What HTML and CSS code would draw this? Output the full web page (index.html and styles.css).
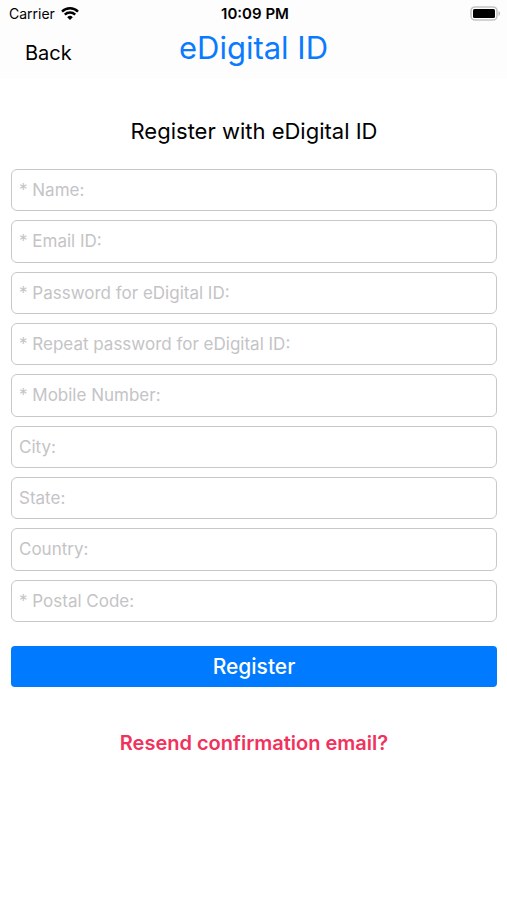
FILE: index.html
```html
<!DOCTYPE html>
<html lang="en">
<head>
<meta charset="utf-8">
<meta name="viewport" content="width=device-width, initial-scale=1">
<title>eDigital ID</title>
<link rel="stylesheet" href="styles.css">
</head>
<body>
<div class="status">
  <div class="status-left">
    <span>Carrier</span>
    <svg class="wifi" viewBox="0 0 18 13" aria-hidden="true">
      <path d="M1 4.6a11.4 11.4 0 0 1 16 0" />
      <path d="M3.8 7.7a7.4 7.4 0 0 1 10.4 0" />
      <path class="dot" d="M9 13 6.2 10.2a4 4 0 0 1 5.6 0z" />
    </svg>
  </div>
  <span class="time">10:09 PM</span>
  <div class="status-right">
    <svg class="battery" viewBox="0 0 31 15" aria-hidden="true">
      <rect class="shell" x="1" y="1" width="26" height="13" rx="4" />
      <rect x="3" y="3" width="22" height="9" rx="1.5" />
      <path class="cap" d="M28.5 5c2 .8 2 4.2 0 5z" />
    </svg>
  </div>
</div>
<header class="nav">
  <button class="back" type="button">Back</button>
  <h1>eDigital ID</h1>
</header>
<main>
  <h2>Register with eDigital ID</h2>
  <form>
    <div class="fields">
      <input type="text" aria-label="Name" placeholder="* Name:">
      <input type="email" aria-label="Email ID" placeholder="* Email ID:">
      <input type="password" aria-label="Password for eDigital ID" placeholder="* Password for eDigital ID:">
      <input type="password" aria-label="Repeat password for eDigital ID" placeholder="* Repeat password for eDigital ID:">
      <input type="tel" aria-label="Mobile Number" placeholder="* Mobile Number:">
      <input type="text" aria-label="City" placeholder="City:">
      <input type="text" aria-label="State" placeholder="State:">
      <input type="text" aria-label="Country" placeholder="Country:">
      <input type="text" aria-label="Postal Code" placeholder="* Postal Code:">
    </div>
    <button class="submit" type="submit">Register</button>
  </form>
  <a class="resend" href="#resend">Resend confirmation email?</a>
</main>
</body>
</html>
```
FILE: styles.css
```css
* {
  box-sizing: border-box;
}

body {
  margin: 0;
  background: #fff;
  color: #000;
  font-family: Inter, "Liberation Sans", sans-serif;
}

.status,
.nav {
  display: grid;
  grid-template-columns: 1fr auto 1fr;
  align-items: center;
  background: #fdfdfd;
}

.status {
  height: 27px;
  padding: 0 6px 0 9px;
  font-size: 14px;
}

.status-left {
  display: flex;
  align-items: center;
  gap: 6px;
}

.status-right {
  display: flex;
  justify-content: flex-end;
}

.time {
  font-size: 15px;
  font-weight: 600;
}

.wifi {
  width: 18px;
  height: 13px;
  fill: none;
  stroke: #000;
  stroke-width: 2.4;
}

.wifi .dot {
  fill: #000;
  stroke: none;
}

.battery {
  width: 31px;
  height: 15px;
}

.battery .shell {
  fill: none;
  stroke: #c4c4c4;
  stroke-width: 1.6;
}

.battery .cap {
  fill: #b8b8b8;
}

.nav {
  height: 52px;
  padding: 0 25px 10px;
}

button {
  border: 0;
  font-family: inherit;
  cursor: pointer;
}

.back {
  justify-self: start;
  padding: 10px 0 0;
  background: none;
  color: #000;
  font-size: 20px;
  line-height: 24px;
}

h1,
h2 {
  margin: 0;
  font-weight: 400;
}

h1 {
  color: #0a7aff;
  font-size: 31px;
  line-height: 40px;
}

main {
  display: flex;
  flex-direction: column;
  align-items: center;
  padding: 37px 10px 37px 11px;
}

h2 {
  font-size: 22px;
  line-height: 30px;
}

form {
  width: 100%;
  padding-top: 23px;
}

.fields {
  display: grid;
  grid-auto-rows: 1fr;
  gap: 9px;
  min-height: 453px;
}

input {
  width: 100%;
  min-height: 42px;
  padding: 0 7px;
  border: 1px solid #c8c8c8;
  border-radius: 6px;
  background: #fff;
  font-family: inherit;
  font-size: 17px;
}

input::placeholder {
  color: #c4c4c6;
  opacity: 1;
}

.submit {
  width: 100%;
  height: 41px;
  margin-top: 24px;
  border-radius: 4px;
  background: #007aff;
  color: #fff;
  font-size: 21px;
  font-weight: 500;
}

.resend {
  margin-top: 43px;
  color: #f0325c;
  font-size: 20px;
  font-weight: 600;
  line-height: 26px;
  text-decoration: none;
}
```
